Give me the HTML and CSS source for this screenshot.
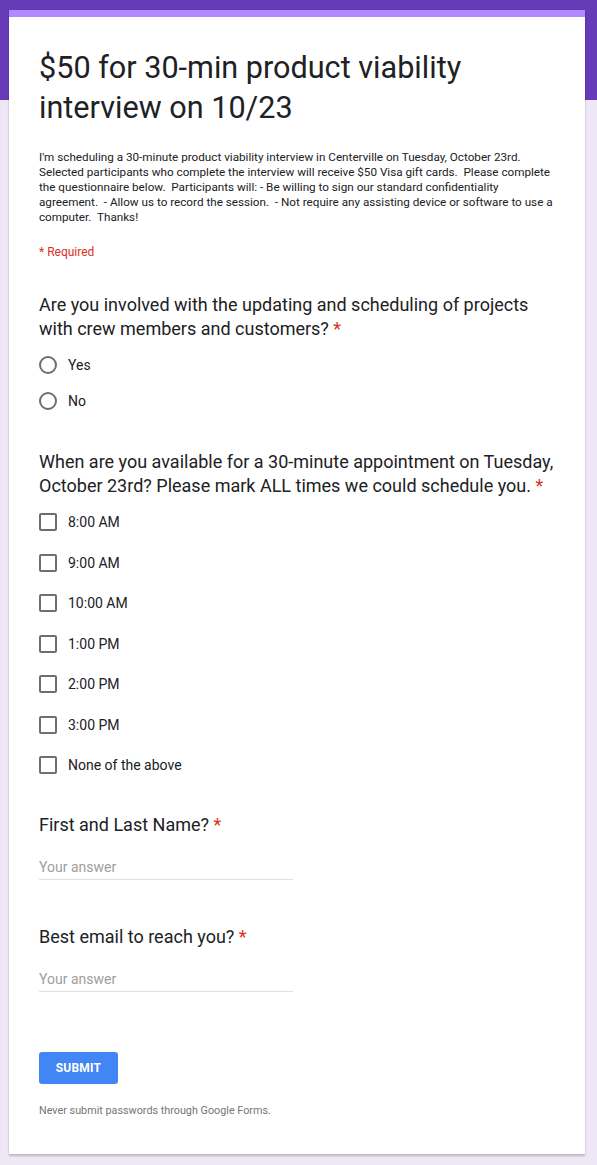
FILE: index.html
```html
<!DOCTYPE html>
<html lang="en">
<head>
<meta charset="utf-8">
<title>$50 for 30-min product viability interview on 10/23</title>
<link rel="stylesheet" href="styles.css">
</head>
<body>
<main class="card">
  <header class="head">
    <h1 class="title">$50 for 30-min product viability interview on 10/23</h1>
    <p class="desc">I'm scheduling a 30-minute product viability interview in Centerville on Tuesday, October 23rd.  Selected participants who complete the interview will receive $50 Visa gift cards.  Please complete the questionnaire below.  Participants will: - Be willing to sign our standard confidentiality agreement.  - Allow us to record the session.  - Not require any assisting device or software to use a computer.  Thanks!</p>
    <p class="required">* Required</p>
  </header>

  <section class="q q1">
    <h2 class="qtitle">Are you involved with the updating and scheduling of projects with crew members and customers?&nbsp;<span class="star">*</span></h2>
    <ul class="options radios">
      <li class="opt"><span class="radio"></span><span class="lbl">Yes</span></li>
      <li class="opt"><span class="radio"></span><span class="lbl">No</span></li>
    </ul>
  </section>

  <section class="q q2">
    <h2 class="qtitle">When are you available for a 30-minute appointment on Tuesday, October 23rd? Please mark ALL times we could schedule you.&nbsp;<span class="star">*</span></h2>
    <ul class="options checks">
      <li class="opt"><span class="check"></span><span class="lbl">8:00 AM</span></li>
      <li class="opt"><span class="check"></span><span class="lbl">9:00 AM</span></li>
      <li class="opt"><span class="check"></span><span class="lbl">10:00 AM</span></li>
      <li class="opt"><span class="check"></span><span class="lbl">1:00 PM</span></li>
      <li class="opt"><span class="check"></span><span class="lbl">2:00 PM</span></li>
      <li class="opt"><span class="check"></span><span class="lbl">3:00 PM</span></li>
      <li class="opt"><span class="check"></span><span class="lbl">None of the above</span></li>
    </ul>
  </section>

  <section class="q q3">
    <h2 class="qtitle">First and Last Name?&nbsp;<span class="star">*</span></h2>
    <div class="answer">Your answer</div>
  </section>

  <section class="q q4">
    <h2 class="qtitle">Best email to reach you?&nbsp;<span class="star">*</span></h2>
    <div class="answer">Your answer</div>
  </section>

  <div class="actions">
    <button class="submit" type="button">SUBMIT</button>
  </div>
  <p class="footer">Never submit passwords through Google Forms.</p>
</main>
</body>
</html>
```

FILE: styles.css
```css
html, body {
  margin: 0;
  padding: 0;
}
body {
  background: linear-gradient(#673ab7 0, #673ab7 100px, #ede7f6 100px);
  background-color: #ede7f6;
  font-family: Roboto, "Liberation Sans", Arial, sans-serif;
  color: #202124;
  min-height: 1165px;
}
.card {
  display: block;
  width: 576px;
  box-sizing: border-box;
  margin: 10px 0 0 9px;
  background: #fff;
  border-top: 7px solid #b388ff;
  box-shadow: 0 2px 2px rgba(0,0,0,0.2), 0 0 1px rgba(0,0,0,0.12);
  padding: 31px 30px 36px 30px;
}
.title {
  margin: 0;
  font-size: 30.6px;
  line-height: 40px;
  font-weight: 400;
  color: #202124;
}
.desc {
  margin: 22px 0 0;
  font-size: 11.7px;
  line-height: 15px;
  color: #202124;
  white-space: pre-wrap;
}
.required {
  margin: 20px 0 0;
  font-size: 12px;
  line-height: 15px;
  color: #d93025;
}
.qtitle {
  margin: 0;
  font-size: 18px;
  line-height: 24px;
  font-weight: 400;
  color: #202124;
}
.star {
  color: #d93025;
}
.q1 { margin-top: 33px; }
.q2 { margin-top: 31px; }
.q3 { margin-top: 27.5px; }
.q4 { margin-top: 45px; }
.options {
  list-style: none;
  margin: 0;
  padding: 0;
}
.radios { margin-top: 6px; }
.radios .opt { height: 36px; }
.checks { margin-top: 4px; }
.checks .opt { height: 40.5px; }
.opt {
  display: flex;
  align-items: center;
  gap: 11px;
}
.lbl {
  font-size: 14px;
  line-height: 20px;
  color: #202124;
}
.radio {
  width: 18px;
  height: 18px;
  box-sizing: border-box;
  border: 2px solid #6e6e6e;
  border-radius: 50%;
  flex: none;
}
.check {
  width: 18px;
  height: 18px;
  box-sizing: border-box;
  border: 2px solid #6e6e6e;
  border-radius: 2px;
  flex: none;
}
.answer {
  margin-top: 19px;
  width: 254px;
  height: 24px;
  box-sizing: border-box;
  border-bottom: 1px solid #e0e0e0;
  font-size: 14px;
  line-height: 22px;
  color: #9e9e9e;
}
.actions {
  margin-top: 60px;
}
.submit {
  display: block;
  width: 79px;
  height: 32px;
  border: 0;
  border-radius: 3px;
  background: #4285f4;
  color: #fff;
  font-family: Roboto, "Liberation Sans", Arial, sans-serif;
  font-size: 12px;
  font-weight: 700;
  letter-spacing: 0.2px;
  padding: 0;
}
.footer {
  margin: 19px 0 0;
  font-size: 10.8px;
  line-height: 15px;
  color: #757575;
}
```
